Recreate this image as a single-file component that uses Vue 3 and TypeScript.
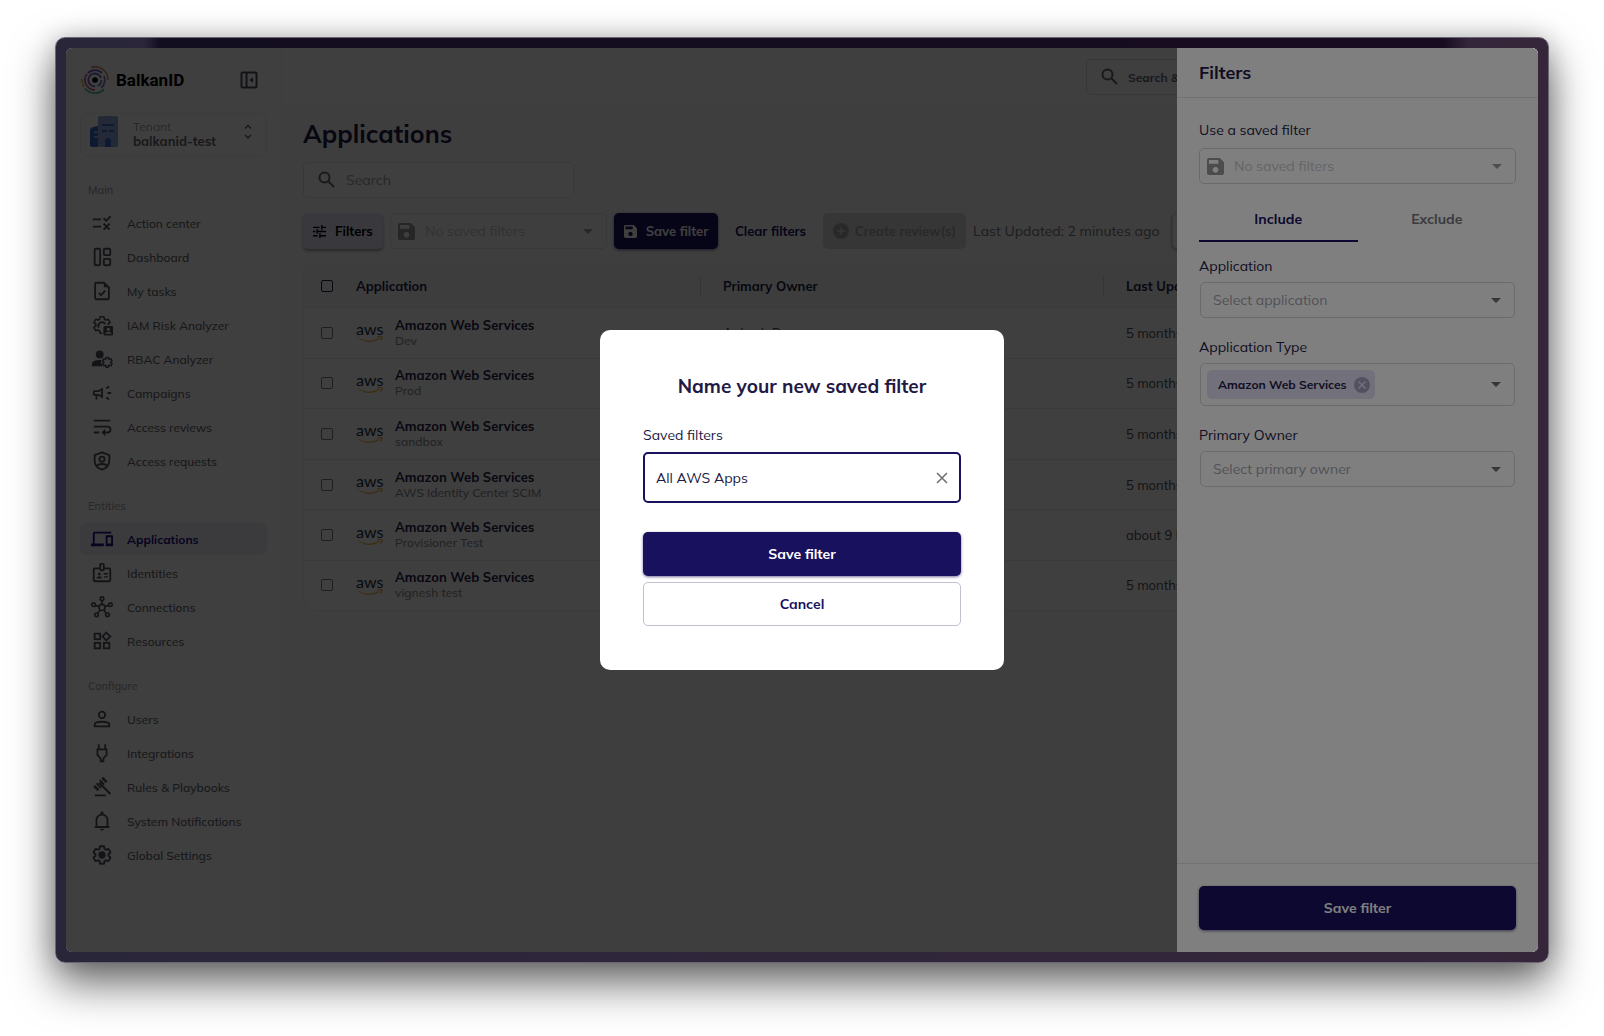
<script setup lang="ts">
import { ref } from 'vue'

interface NavItem { label: string; icon: string; active?: boolean }
interface NavSection { title: string; items: NavItem[] }
interface AppRow { name: string; detail: string; owner: string; updated: string; checked: boolean }

const gear =
  'M19.43 12.98c.04-.32.07-.64.07-.98s-.03-.66-.07-.98l2.11-1.65c.19-.15.24-.42.12-.64l-2-3.46c-.12-.22-.39-.3-.61-.22l-2.49 1c-.52-.4-1.08-.73-1.69-.98l-.38-2.65C14.46 2.18 14.25 2 14 2h-4c-.25 0-.46.18-.49.42l-.38 2.65c-.61.25-1.17.59-1.69.98l-2.49-1c-.23-.09-.49 0-.61.22l-2 3.46c-.13.22-.07.49.12.64l2.11 1.65c-.04.32-.07.65-.07.98s.03.66.07.98l-2.11 1.65c-.19.15-.24.42-.12.64l2 3.46c.12.22.39.3.61.22l2.49-1c.52.4 1.08.73 1.69.98l.38 2.65c.03.24.24.42.49.42h4c.25 0 .46-.18.49-.42l.38-2.65c.61-.25 1.17-.59 1.69-.98l2.49 1c.23.09.49 0 .61-.22l2-3.46c.12-.22.07-.49-.12-.64z'

const line = 'fill="none" stroke="currentColor" stroke-width="2"'

const icons: Record<string, string> = {
  rule: '<path d="M16.54 11L13 7.46l1.41-1.41 2.12 2.12 4.24-4.24 1.41 1.41zM11 7H2v2h9zm10 6.41L19.59 12 17 14.59 14.41 12 13 13.41 15.59 16 13 18.59 14.41 20 17 17.41 19.59 20 21 18.59 18.41 16zM11 15H2v2h9z"/>',
  dashboard: `<g ${line}><rect x="4" y="3" width="6" height="18" rx="1"/><rect x="14" y="3" width="7" height="7" rx="1"/><rect x="14" y="14" width="7" height="7" rx="1"/></g>`,
  task: `<path d="M14 2v6h6z"/><g ${line}><path d="M14 3H5.500a1 1 0 0 0-1 1v16a1 1 0 0 0 1 1h13a1 1 0 0 0 1-1V8z"/><path d="M8.500 14l2.500 2.500 4.500-5"/></g>`,
  iam: `<path d="${gear}" ${line} transform="translate(1.200 1.200) scale(.9)"/><path d="M8.500 15a4 4 0 1 1 7-4" ${line}/><rect x="12.500" y="12" width="12" height="12" rx="2.500" fill="#fff"/><rect x="13.500" y="13" width="11" height="10.500" rx="2"/><circle cx="19" cy="16.700" r="1.700" fill="#fff"/><path d="M15.700 21.500c.3-3 6.300-3 6.600 0z" fill="#fff"/>`,
  rbac: `<circle cx="9.500" cy="7" r="4.300"/><path d="M1 20v-2.500C1 14 6 12.800 11.500 13.200a7 7 0 0 0 .8 6.800z"/><path d="${gear}" fill="none" stroke="currentColor" stroke-width="3.200" transform="translate(11.400 9.200) scale(.53)"/>`,
  campaign: '<path d="M18 11v2h4v-2zm-2 6.610c.96.71 2.210 1.650 3.200 2.390l1.200-1.600c-.99-.74-2.240-1.680-3.200-2.400zM20.400 5.600L19.200 4c-.99.74-2.240 1.680-3.200 2.400L17.200 8c.96-.72 2.210-1.650 3.200-2.400zM4 9c-1.100 0-2 .9-2 2v2c0 1.100.9 2 2 2h1v4h2v-4h1l5 3V6L8 9zm5.030 1.710L11 9.530v4.940l-1.970-1.180-.48-.29H4v-2h4.550z"/>',
  reviews: `<path d="M3 5h18M3 11.500h15a3.200 3.200 0 0 1 0 6.500h-4M3 18h6" ${line}/><path d="M15.500 14v8l-4-4z"/>`,
  shield: `<g ${line}><path d="M12 2.500l8 3v6c0 4.500-3 8.500-8 10-5-1.500-8-5.500-8-10v-6z" stroke-linejoin="round"/><circle cx="12" cy="10" r="2.800"/><path d="M6 17.500c3-3 9-3 12 0"/></g>`,
  devices: '<path d="M4 6h18V4H4c-1.100 0-2 .9-2 2v11H0v3h14v-3H4zm19 2h-6c-.55 0-1 .45-1 1v10c0 .55.45 1 1 1h6c.55 0 1-.45 1-1V9c0-.55-.45-1-1-1zm-1 9h-4v-7h4z"/>',
  badge: `<g ${line}><path d="M9.500 7H4a1 1 0 0 0-1 1v12a1 1 0 0 0 1 1h16a1 1 0 0 0 1-1V8a1 1 0 0 0-1-1h-5.500"/><rect x="10" y="2" width="4" height="7" rx="1"/></g><circle cx="9" cy="13.200" r="1.600"/><path d="M6 18c0-3.200 6-3.200 6 0zM14 12h4.500v1.500H14zM14 15.500h4.500V17H14z"/>`,
  hub: `<g fill="none" stroke="currentColor" stroke-width="1.800"><circle cx="12" cy="12.500" r="3.300"/><circle cx="12" cy="3" r="2"/><circle cx="2.800" cy="9.500" r="2"/><circle cx="21.200" cy="9.500" r="2"/><circle cx="6" cy="20.500" r="2"/><circle cx="18" cy="20.500" r="2"/><path d="M12 5v4M4.700 10.200l4 1.300M19.300 10.200l-4 1.300M7.300 19l2.500-3.600M16.700 19l-2.500-3.600"/></g>`,
  widgets: `<g ${line}><rect x="4" y="4" width="6" height="6"/><rect x="4" y="14" width="6" height="6"/><rect x="14" y="14" width="6" height="6"/><path d="M16.700 2.800l4.300 4.200-4.300 4.300L12.500 7z"/></g>`,
  person: `<g ${line}><circle cx="12" cy="7.500" r="3.500"/><path d="M4 20v-2c0-4 16-4 16 0v2z"/></g>`,
  plug: `<path d="M8.500 2.500V8M15.500 2.500V8M7 8h10v6l-3.500 4v3h-3v-3L7 14z" ${line}/>`,
  gavel: '<path d="M3 22h13v2H3zM7.200 8.900l1.700-1.700L22.200 20.500l-1.700 1.700zM12.800 1l5.200 5.200-2.200 2.200-5.200-5.200zM3.200 10.600l5.200 5.200-2.200 2.200L1 12.800zM9.600 4.200l5.200 5.200-1.600 1.600L8 5.800zM5.800 8l5.200 5.200-1.600 1.600-5.200-5.200z" transform="translate(1.500 0) scale(.92)"/>',
  bell: `<path d="M4 18.500h16M6 18.500V11a6 6 0 0 1 12 0v7.500" ${line}/><path d="M10.500 2h3v3.500h-3zM10 20.500h4a2 2 0 0 1-4 0z"/>`,
  settings: `<path d="${gear}" fill="none" stroke="currentColor" stroke-width="2.200" transform="translate(.6 .6) scale(.95)"/><circle cx="12" cy="12" r="4"/>`,
}

const sections: NavSection[] = [
  {
    title: 'Main',
    items: [
      { label: 'Action center', icon: 'rule' },
      { label: 'Dashboard', icon: 'dashboard' },
      { label: 'My tasks', icon: 'task' },
      { label: 'IAM Risk Analyzer', icon: 'iam' },
      { label: 'RBAC Analyzer', icon: 'rbac' },
      { label: 'Campaigns', icon: 'campaign' },
      { label: 'Access reviews', icon: 'reviews' },
      { label: 'Access requests', icon: 'shield' },
    ],
  },
  {
    title: 'Entities',
    items: [
      { label: 'Applications', icon: 'devices', active: true },
      { label: 'Identities', icon: 'badge' },
      { label: 'Connections', icon: 'hub' },
      { label: 'Resources', icon: 'widgets' },
    ],
  },
  {
    title: 'Configure',
    items: [
      { label: 'Users', icon: 'person' },
      { label: 'Integrations', icon: 'plug' },
      { label: 'Rules & Playbooks', icon: 'gavel' },
      { label: 'System Notifications', icon: 'bell' },
      { label: 'Global Settings', icon: 'settings' },
    ],
  },
]

const makeRow = (detail: string, updated = '5 months ago'): AppRow => ({
  name: 'Amazon Web Services', detail, owner: 'Ankush Deep', updated, checked: false,
})

const rows = ref<AppRow[]>([
  makeRow('Dev'),
  makeRow('Prod'),
  makeRow('sandbox'),
  makeRow('AWS Identity Center SCIM'),
  makeRow('Provisioner Test', 'about 9 hours ago'),
  makeRow('vignesh test'),
])

const filterName = ref('All AWS Apps')
</script>

<template>
  <div class="page">
    <div class="frame">
      <div class="screen">
        <aside class="sidebar">
          <div class="brand">
            <svg class="logo" viewBox="0 0 28 28" fill="none" stroke-width="1.800">
              <path d="M10 1.500A13 13 0 0 1 27 14" stroke="#d9956c" />
              <path d="M1 13a13 13 0 0 0 2 8" stroke="#d8c35a" />
              <path d="M4 22.500A13 13 0 0 0 23 23.500" stroke="#58b7a5" />
              <path d="M14 24A10 10 0 0 1 6 8" stroke="#c0628c" />
              <path d="M7 7a10 10 0 0 1 14 0" stroke="#6a5fc4" />
              <path d="M23 10a10 10 0 0 1-3 12" stroke="#8d6fd0" />
              <path d="M14 20.500A6.500 6.500 0 1 1 20 12" stroke="#6f5fb8" />
              <path d="M20.500 14a6.500 6.500 0 0 1-4 6" stroke="#5f86c8" />
              <circle cx="14" cy="14" r="2.800" fill="#000" />
            </svg>
            <span class="brand-name">BalkanID</span>
            <button class="icon-btn" aria-label="Collapse menu">
              <svg viewBox="0 0 18 18" width="18" height="18" fill="none" stroke="currentColor" stroke-width="2">
                <rect x="1.500" y="1.500" width="15" height="15" rx="1" />
                <path d="M6.500 2v14" />
                <path d="M13 6v6L9.500 9z" fill="currentColor" stroke="none" />
              </svg>
            </button>
          </div>

          <button class="tenant">
            <svg viewBox="0 0 30 32" width="30" height="32">
              <path d="M1 14q0-3 8-4v21H3q-2 0-2-2z" fill="#3668c8" />
              <rect x="9" y="0" width="20" height="31" rx="2" fill="#8fa6dc" />
              <path d="M5 15h4v2H5zM5 20h4v2H5z" fill="#8fa6dc" />
              <path d="M13 8h12v2H13zM13 14h5v2h-5zM20 14h5v2h-5zM16 31v-6q0-3 3-3t3 3v6z" fill="#3668c8" />
            </svg>
            <span class="tenant-text">
              <small>Tenant</small>
              <strong>balkanid-test</strong>
            </span>
            <svg viewBox="0 0 8 16" width="8" height="16" fill="none" stroke="currentColor" stroke-width="1.500">
              <path d="M1 4.500l3-3 3 3M1 11l3 3 3-3" />
            </svg>
          </button>

          <nav>
            <section v-for="s in sections" :key="s.title" class="nav-section">
              <h2>{{ s.title }}</h2>
              <a v-for="item in s.items" :key="item.label" href="#" :class="['nav-item', { active: item.active }]">
                <svg viewBox="0 0 24 24" fill="currentColor" v-html="icons[item.icon]" />
                <span>{{ item.label }}</span>
              </a>
            </section>
          </nav>
        </aside>

        <div class="content">
          <header class="topbar">
            <button class="quick">
              <svg class="search-icon" viewBox="0 0 18 18"><circle cx="6.500" cy="6.500" r="5" /><path d="M10.500 10.500L16 16" /></svg>
              Search &amp; quick actions
            </button>
          </header>

          <main class="main">
            <h1>Applications</h1>
            <label class="search">
              <svg class="search-icon" viewBox="0 0 18 18"><circle cx="6.500" cy="6.500" r="5" /><path d="M10.500 10.500L16 16" /></svg>
              <input type="text" placeholder="Search" aria-label="Search" />
            </label>

            <div class="toolbar">
              <button class="btn tonal">
                <svg viewBox="0 0 14 14" width="13" height="13" fill="none" stroke="currentColor" stroke-width="1.500">
                  <path d="M0 2.500h7M9.500 2.500H14M9.500 0v5M0 7h2.500M5 7h9M4.500 4.500v5M0 11.500h5M7.500 11.500H14M7.500 9v5" />
                </svg>
                Filters
              </button>
              <span class="field saved">
                <svg class="disk" viewBox="0 0 18 18"><path d="M2 0h11.500L18 4.500V16q0 2-2 2H2q-2 0-2-2V2q0-2 2-2zm0 2v4h10V2zm7 7.500a3 3 0 1 0 .01 0z" fill-rule="evenodd" /></svg>
                <select disabled aria-label="Saved filters"><option>No saved filters</option></select>
              </span>
              <button class="btn primary">
                <svg class="disk small" viewBox="0 0 18 18"><path d="M2 0h11.500L18 4.500V16q0 2-2 2H2q-2 0-2-2V2q0-2 2-2zm0 2v4h10V2zm7 7.500a3 3 0 1 0 .01 0z" fill-rule="evenodd" /></svg>
                Save filter
              </button>
              <button class="btn plain">Clear filters</button>
              <button class="btn muted" disabled>
                <svg viewBox="0 0 16 16" width="16" height="16">
                  <circle cx="8" cy="8" r="8" fill="currentColor" />
                  <path d="M8 4v8M4 8h8" stroke="#dcdcdc" stroke-width="1.500" />
                </svg>
                Create review(s)
              </button>
              <span class="updated">Last Updated: 2 minutes ago</span>
              <button class="btn refresh" aria-label="Refresh"></button>
            </div>

            <div class="table-wrap">
              <table>
                <colgroup><col class="c-check" /><col class="c-app" /><col class="c-owner" /><col /></colgroup>
                <thead>
                  <tr>
                    <th><input type="checkbox" class="strong" aria-label="Select all" /></th>
                    <th><span class="th">Application</span></th>
                    <th><span class="th">Primary Owner</span></th>
                    <th>Last Updated</th>
                  </tr>
                </thead>
                <tbody>
                  <tr v-for="row in rows" :key="row.detail">
                    <td><input v-model="row.checked" type="checkbox" :aria-label="'Select ' + row.detail" /></td>
                    <td>
                      <div class="app">
                        <span class="aws">aws
                          <svg viewBox="0 0 27 7" width="27" height="7">
                            <path d="M0 0.500Q12 8 23 2l.6 1Q12 10 0 .5zM21 .6q4.500-1.200 5.500 0 .6 2-1.800 4.400l-.5-.3Q25.500 2 25 1.600q-.6-.5-4-.4z" fill="#f2ac3a" />
                          </svg>
                        </span>
                        <span class="app-text"><strong>{{ row.name }}</strong><span>{{ row.detail }}</span></span>
                      </div>
                    </td>
                    <td class="dark">{{ row.owner }}</td>
                    <td class="dark">{{ row.updated }}</td>
                  </tr>
                </tbody>
              </table>
            </div>
          </main>
        </div>

        <div class="backdrop"></div>

        <aside class="drawer">
          <header><h2>Filters</h2></header>
          <div class="drawer-body">
            <label class="lbl" for="saved">Use a saved filter</label>
            <span class="field saved">
              <svg class="disk" viewBox="0 0 18 18"><path d="M2 0h11.500L18 4.500V16q0 2-2 2H2q-2 0-2-2V2q0-2 2-2zm0 2v4h10V2zm7 7.500a3 3 0 1 0 .01 0z" fill-rule="evenodd" /></svg>
              <select id="saved" disabled><option>No saved filters</option></select>
            </span>

            <div class="tabs" role="tablist">
              <button role="tab" aria-selected="true" class="on">Include</button>
              <button role="tab" aria-selected="false">Exclude</button>
            </div>

            <label class="lbl" for="f-app">Application</label>
            <span class="field inset"><select id="f-app"><option>Select application</option></select></span>

            <label class="lbl" for="f-type">Application Type</label>
            <span class="field inset tall">
              <span class="chip">
                Amazon Web Services
                <button aria-label="Remove Amazon Web Services">
                  <svg viewBox="0 0 16 16" width="16" height="16"><circle cx="8" cy="8" r="8" fill="#a7a3bf" /><path d="M4.500 4.500l7 7M11.500 4.500l-7 7" stroke="#e4e1f7" stroke-width="1.500" /></svg>
                </button>
              </span>
              <input id="f-type" type="text" />
            </span>

            <label class="lbl" for="f-owner">Primary Owner</label>
            <span class="field inset"><select id="f-owner"><option>Select primary owner</option></select></span>
          </div>
          <footer><button class="btn primary wide">Save filter</button></footer>
        </aside>

        <div class="backdrop center">
          <form class="modal" role="dialog" aria-labelledby="modal-title" @submit.prevent>
            <h2 id="modal-title">Name your new saved filter</h2>
            <label class="lbl" for="name">Saved filters</label>
            <span class="name-field">
              <input id="name" v-model="filterName" type="text" />
              <button type="button" aria-label="Clear" @click="filterName = ''">
                <svg viewBox="0 0 12 12" width="12" height="12" fill="none" stroke="currentColor" stroke-width="1.500"><path d="M1 1l10 10M11 1L1 11" /></svg>
              </button>
            </span>
            <button class="btn primary wide">Save filter</button>
            <button type="button" class="btn outline wide">Cancel</button>
          </form>
        </div>
      </div>
    </div>
  </div>
</template>

<style>
body { background: #fff; }
</style>

<style scoped>
* { box-sizing: border-box; }
.page {
  display: flex;
  min-height: 100vh;
  padding: 37px 55px 73px;
  font-family: Mulish, Lato, sans-serif;
  font-size: 14px;
  color: #221a44;
}
h1, h2 { margin: 0; }
strong { font-weight: 700; }
button, input, select { font: inherit; color: inherit; }
button { border: 0; background: none; padding: 0; cursor: pointer; }
svg { flex: none; }

.frame {
  flex: 1;
  display: flex;
  min-width: 0;
  padding: 10px;
  border: 1px solid #6a6672;
  border-radius: 10px;
  background:
    linear-gradient(90deg, transparent 88px, #120d1f 104px, #180c20 calc(100% - 104px), transparent calc(100% - 80px)) top / 100% 20px no-repeat,
    linear-gradient(90deg, #2a263a, #35263a);
  box-shadow: 0 20px 44px rgba(0, 0, 0, 0.6), 0 0 24px rgba(0, 0, 0, 0.18);
}
.screen {
  position: relative;
  flex: 1;
  display: flex;
  min-width: 0;
  overflow: hidden;
  border-radius: 6px;
  background: #fff;
}

.sidebar {
  flex: none;
  width: 216px;
  padding: 16px 14px;
  border-right: 1px solid #f2f2f4;
}
.brand { display: flex; align-items: center; height: 32px; padding: 0 9px 0 1px; }
.logo { width: 28px; height: 28px; }
.brand-name { flex: 1; padding-left: 7px; font: 700 17px Roboto, sans-serif; color: #000; }
.icon-btn { display: flex; color: #4c4b58; }
.tenant {
  display: flex;
  align-items: center;
  width: 100%;
  height: 43px;
  margin-top: 17px;
  padding: 0 14px 6px 8px;
  border: 1px solid #eeeef0;
  border-radius: 6px;
  color: #66646f;
}
.tenant-text { flex: 1; display: flex; flex-direction: column; padding: 5px 0 0 14px; text-align: left; line-height: 14px; }
.tenant-text small { font-size: 12px; color: #a2a2a6; }
.tenant-text strong { font-size: 13px; color: #66646f; }

.nav-section { display: flex; flex-direction: column; gap: 2px; margin-bottom: 21px; }
.nav-section h2 { padding: 0 8px; margin-bottom: 7px; font-size: 11px; line-height: 16px; font-weight: 500; color: #a0a0a4; }
nav { padding-top: 26px; }
.nav-item {
  display: flex;
  align-items: center;
  gap: 14px;
  height: 32px;
  padding-left: 11px;
  border-radius: 6px;
  font-size: 12px;
  font-weight: 500;
  color: #62616c;
  text-decoration: none;
}
.nav-item svg { width: 22px; height: 22px; color: #53525e; }
.nav-item.active { background: #eeecf8; font-weight: 700; }
.nav-item.active, .nav-item.active svg { color: #1c1180; }

.content { flex: 1; min-width: 0; display: flex; flex-direction: column; background: #f9f9fa; }
.topbar { display: flex; justify-content: flex-end; height: 56px; padding: 11px 22px 9px; background: #fcfcfd; }
.quick {
  display: flex;
  align-items: center;
  gap: 9px;
  width: 430px;
  padding-left: 14px;
  border: 1px solid #dededf;
  border-radius: 5px;
  font-size: 12px;
  font-weight: 700;
  color: #66646f;
}
.search-icon { width: 18px; height: 18px; fill: none; stroke: #66646f; stroke-width: 2; }

.main { padding: 14px 21px; }
h1 { font-size: 25px; line-height: 32px; font-weight: 700; }
.search {
  display: flex;
  align-items: center;
  gap: 10px;
  width: 271px;
  height: 36px;
  margin-top: 12px;
  padding: 0 14px;
  border: 1px solid #e2e2e6;
  border-radius: 5px;
  background: #fcfcfd;
}
.search input { flex: 1; min-width: 0; padding: 0; border: 0; outline: 0; background: none; }
.search input::placeholder { color: #a2a2ab; opacity: 1; }

.toolbar { display: flex; gap: 7px; margin-top: 15px; white-space: nowrap; }
.btn {
  flex: none;
  display: flex;
  align-items: center;
  justify-content: center;
  gap: 9px;
  height: 36px;
  border-radius: 5px;
  font-weight: 700;
}
.toolbar .btn { font-size: 13px; }
.tonal { width: 80px; background: #e4e1f0; color: #000; box-shadow: 0 2px 3px rgba(0, 0, 0, 0.35); }
.primary { background: #18115e; color: #fff; box-shadow: 0 1px 3px rgba(24, 17, 94, 0.6); }
.toolbar .primary { width: 104px; }
.plain { width: 91px; color: #18115e; }
.toolbar .muted { width: 143px; gap: 6px; background: #dadada; color: #a4a4a4; }
.updated { align-self: center; width: 192px; color: #77777c; }
.refresh { width: 44px; background: #fff; border: 1px solid #dcdce0; box-shadow: 0 1px 3px rgba(0, 0, 0, 0.4); }

.field {
  position: relative;
  display: flex;
  align-items: center;
  height: 36px;
  border: 1px solid #d6d6da;
  border-radius: 5px;
}
.field::after {
  content: '';
  position: absolute;
  right: 13px;
  border: 5px solid transparent;
  border-top-color: #6c6c70;
  border-bottom: 0;
}
.field select {
  flex: 1;
  min-width: 0;
  height: 100%;
  padding: 0 12px;
  border: 0;
  outline: 0;
  background: none;
  appearance: none;
  color: #a3a2ad;
  opacity: 1;
}
.saved { padding-left: 7px; }
.field.saved select { padding: 0 10px; color: #c9c9cc; }
.saved::after { border-top-color: #9c9ca0; }
.toolbar .saved { width: 217px; border-color: #e2e2e6; }
.disk { width: 17px; height: 17px; fill: #98989c; }
.disk.small { width: 13px; height: 13px; fill: #fff; }

.table-wrap { margin-top: 15px; border: 1px solid #ededf0; border-radius: 12px; overflow: hidden; background: #fcfcfd; }
table { width: 100%; height: 345px; table-layout: fixed; border-spacing: 0; font-size: 13px; }
.c-check { width: 52px; }
.c-app { width: 345px; }
.c-owner { width: 403px; }
th, td { padding: 0; text-align: left; vertical-align: middle; }
th { height: 43px; background: #f5f5f7; font-weight: 700; border-bottom: 1px solid #e8e8eb; }
th:nth-child(n + 3), td:nth-child(n + 3) { padding-left: 22px; }
.th { display: block; line-height: 20px; border-right: 1px solid #d4d4d8; }
tbody tr:not(:last-child) td { border-bottom: 1px solid #e9e9ec; }
th:first-child, td:first-child { padding-left: 17px; }
input[type='checkbox'] {
  display: block;
  appearance: none;
  width: 12px;
  height: 12px;
  margin: 0;
  border: 1px solid #7a7984;
  border-radius: 2px;
}
input.strong { border-color: #221a44; }
.app { display: flex; align-items: center; }
.aws { display: flex; flex-direction: column; width: 39px; font: 400 16px/14px Lato, sans-serif; color: #252f3e; }
.app-text { display: flex; flex-direction: column; line-height: 16px; font-size: 12px; font-weight: 500; color: #8a8a90; }
.app-text strong { font-size: 13px; font-weight: 700; color: #221a44; }
.dark { color: #4b4a55; }

.backdrop { position: absolute; inset: 0; background: rgba(0, 0, 0, 0.5); }
.center { display: flex; align-items: center; justify-content: center; }

.drawer {
  position: absolute;
  inset: 0 0 0 auto;
  display: flex;
  flex-direction: column;
  width: 361px;
  background: #fff;
}
.drawer header { padding: 13px 22px 12px; border-bottom: 1px solid #e4e4e8; }
.drawer header h2 { font-size: 18px; line-height: 24px; }
.drawer-body { flex: 1; display: flex; flex-direction: column; padding: 22px; }
.lbl { line-height: 20px; }
.drawer-body .lbl { margin-bottom: 6px; }
.drawer-body .lbl:first-child { margin-bottom: 8px; }
.inset { margin: 0 1px 19px; }
.drawer-body .saved { border-color: #d4d4d8; }
.tall { height: 43px; padding-left: 6px; }
.tall input { flex: 1; min-width: 0; border: 0; outline: 0; background: none; }
.chip {
  display: flex;
  align-items: center;
  gap: 7px;
  height: 29px;
  padding: 0 5px 0 11px;
  border-radius: 5px;
  background: #e4e1f7;
  font-size: 12px;
  font-weight: 700;
}
.chip button { display: flex; }
.tabs { display: flex; margin: 13px 0 14px; }
.tabs button { flex: 1; height: 45px; border-bottom: 2px solid transparent; font-weight: 700; color: #77777e; }
.tabs .on { border-color: #18115e; color: #18115e; }
.drawer footer { padding: 22px; border-top: 1px solid #e4e4e8; }
.wide { width: 100%; height: 44px; }

.modal {
  width: 404px;
  padding: 43px 43px 44px;
  border-radius: 10px;
  background: #fff;
}
.modal h2 { margin-bottom: 26px; font-size: 19px; line-height: 26px; text-align: center; }
.modal .lbl { display: block; margin-bottom: 7px; }
.name-field {
  display: flex;
  align-items: center;
  height: 51px;
  margin-bottom: 29px;
  padding: 0 11px;
  border: 2px solid #18115e;
  border-radius: 5px;
}
.name-field input { flex: 1; min-width: 0; padding: 0; border: 0; outline: 0; background: none; }
.name-field button { display: flex; color: #6d6d72; }
.outline { margin-top: 6px; border: 1px solid #c1bfd0; color: #18115e; }
</style>
